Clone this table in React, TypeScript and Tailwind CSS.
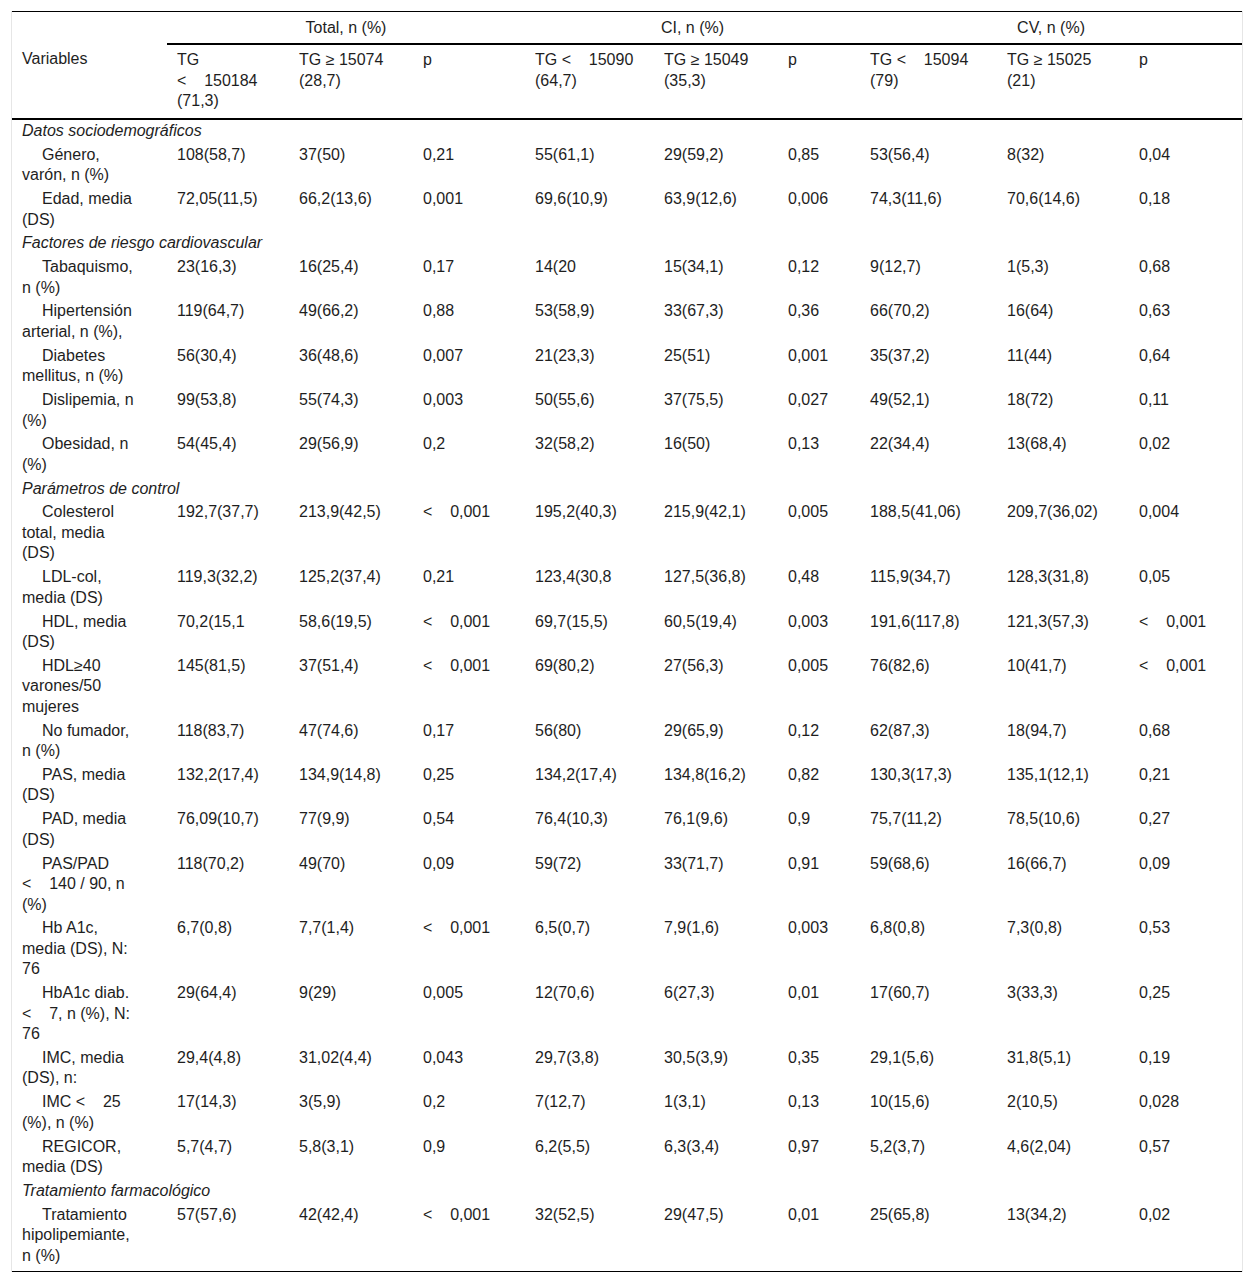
import React from "react";

type Row = { section: string } | { cells: string[] };

const rows: Row[] = [
  { section: "Datos sociodemográficos" },
  { cells: ["Género, varón, n (%)", "108(58,7)", "37(50)", "0,21", "55(61,1)", "29(59,2)", "0,85", "53(56,4)", "8(32)", "0,04"] },
  { cells: ["Edad, media (DS)", "72,05(11,5)", "66,2(13,6)", "0,001", "69,6(10,9)", "63,9(12,6)", "0,006", "74,3(11,6)", "70,6(14,6)", "0,18"] },
  { section: "Factores de riesgo cardiovascular" },
  { cells: ["Tabaquismo, n (%)", "23(16,3)", "16(25,4)", "0,17", "14(20", "15(34,1)", "0,12", "9(12,7)", "1(5,3)", "0,68"] },
  { cells: ["Hipertensión arterial, n (%),", "119(64,7)", "49(66,2)", "0,88", "53(58,9)", "33(67,3)", "0,36", "66(70,2)", "16(64)", "0,63"] },
  { cells: ["Diabetes mellitus, n (%)", "56(30,4)", "36(48,6)", "0,007", "21(23,3)", "25(51)", "0,001", "35(37,2)", "11(44)", "0,64"] },
  { cells: ["Dislipemia, n (%)", "99(53,8)", "55(74,3)", "0,003", "50(55,6)", "37(75,5)", "0,027", "49(52,1)", "18(72)", "0,11"] },
  { cells: ["Obesidad, n (%)", "54(45,4)", "29(56,9)", "0,2", "32(58,2)", "16(50)", "0,13", "22(34,4)", "13(68,4)", "0,02"] },
  { section: "Parámetros de control" },
  { cells: ["Colesterol total, media (DS)", "192,7(37,7)", "213,9(42,5)", "<0,001", "195,2(40,3)", "215,9(42,1)", "0,005", "188,5(41,06)", "209,7(36,02)", "0,004"] },
  { cells: ["LDL-col, media (DS)", "119,3(32,2)", "125,2(37,4)", "0,21", "123,4(30,8", "127,5(36,8)", "0,48", "115,9(34,7)", "128,3(31,8)", "0,05"] },
  { cells: ["HDL, media (DS)", "70,2(15,1", "58,6(19,5)", "<0,001", "69,7(15,5)", "60,5(19,4)", "0,003", "191,6(117,8)", "121,3(57,3)", "<0,001"] },
  { cells: ["HDL≥40 varones/50 mujeres", "145(81,5)", "37(51,4)", "<0,001", "69(80,2)", "27(56,3)", "0,005", "76(82,6)", "10(41,7)", "<0,001"] },
  { cells: ["No fumador, n (%)", "118(83,7)", "47(74,6)", "0,17", "56(80)", "29(65,9)", "0,12", "62(87,3)", "18(94,7)", "0,68"] },
  { cells: ["PAS, media (DS)", "132,2(17,4)", "134,9(14,8)", "0,25", "134,2(17,4)", "134,8(16,2)", "0,82", "130,3(17,3)", "135,1(12,1)", "0,21"] },
  { cells: ["PAD, media (DS)", "76,09(10,7)", "77(9,9)", "0,54", "76,4(10,3)", "76,1(9,6)", "0,9", "75,7(11,2)", "78,5(10,6)", "0,27"] },
  { cells: ["PAS/PAD <140 / 90, n (%)", "118(70,2)", "49(70)", "0,09", "59(72)", "33(71,7)", "0,91", "59(68,6)", "16(66,7)", "0,09"] },
  { cells: ["Hb A1c, media (DS), N: 76", "6,7(0,8)", "7,7(1,4)", "<0,001", "6,5(0,7)", "7,9(1,6)", "0,003", "6,8(0,8)", "7,3(0,8)", "0,53"] },
  { cells: ["HbA1c diab. <7, n (%), N: 76", "29(64,4)", "9(29)", "0,005", "12(70,6)", "6(27,3)", "0,01", "17(60,7)", "3(33,3)", "0,25"] },
  { cells: ["IMC, media (DS), n:", "29,4(4,8)", "31,02(4,4)", "0,043", "29,7(3,8)", "30,5(3,9)", "0,35", "29,1(5,6)", "31,8(5,1)", "0,19"] },
  { cells: ["IMC <25 (%), n (%)", "17(14,3)", "3(5,9)", "0,2", "7(12,7)", "1(3,1)", "0,13", "10(15,6)", "2(10,5)", "0,028"] },
  { cells: ["REGICOR, media (DS)", "5,7(4,7)", "5,8(3,1)", "0,9", "6,2(5,5)", "6,3(3,4)", "0,97", "5,2(3,7)", "4,6(2,04)", "0,57"] },
  { section: "Tratamiento farmacológico" },
  { cells: ["Tratamiento hipolipemiante, n (%)", "57(57,6)", "42(42,4)", "<0,001", "32(52,5)", "29(47,5)", "0,01", "25(65,8)", "13(34,2)", "0,02"] },
];

// "<" is followed by a wide gap and stays glued to the next token
function Txt({ s }: { s: string }) {
  const i = s.indexOf("<");
  if (i < 0) return <>{s}</>;
  const rest = s.slice(i + 1);
  const sp = rest.search(/[ ]/);
  const tok = sp < 0 ? rest : rest.slice(0, sp);
  const tail = sp < 0 ? "" : rest.slice(sp);
  return (
    <>
      {s.slice(0, i)}
      <span className="whitespace-nowrap">{"<\u00a0\u00a0\u00a0\u00a0" + tok}</span>
      {tail}
    </>
  );
}

const widths = ["w-[155px]", "w-[122px]", "w-[124px]", "w-[112px]", "w-[129px]", "w-[124px]", "w-[82px]", "w-[137px]", "w-[132px]", "w-[113px]"];

const subHeads = ["TG <150184 (71,3)", "TG ≥ 15074 (28,7)", "p", "TG <15090 (64,7)", "TG ≥ 15049 (35,3)", "p", "TG <15094 (79)", "TG ≥ 15025 (21)", "p"];

export default function App() {
  return (
    <div className="min-h-[1285px] bg-white pl-[11px] pt-[11px] font-['Liberation_Sans',Arial,sans-serif] text-[16px] leading-[20.5px] text-[#1e1e1e]">
      <div className="w-[1232px] border-x border-[#e6e6e6]">
        <table className="w-full table-fixed border-collapse">
          <colgroup>
            {widths.map((w, i) => (
              <col key={i} className={w} />
            ))}
          </colgroup>
          <thead>
            <tr className="border-t border-black">
              <th className="p-0" />
              <th colSpan={3} className="border-b-2 border-black px-[10px] pb-[4.5px] pt-[6px] text-center font-normal">
                Total, n (%)
              </th>
              <th colSpan={3} className="border-b-2 border-black px-[10px] pb-[4.5px] pt-[6px] text-center font-normal">
                CI, n (%)
              </th>
              <th colSpan={3} className="border-b-2 border-black px-[10px] pb-[4.5px] pt-[6px] text-center font-normal">
                CV, n (%)
              </th>
            </tr>
            <tr className="border-b-2 border-black">
              <th className="px-[10px] pb-[6.5px] pt-[5px] text-left align-top font-normal">Variables</th>
              {subHeads.map((h, i) => (
                <th key={i} className="px-[10px] pb-[6.5px] pt-[5px] text-left align-top font-normal">
                  <Txt s={h} />
                </th>
              ))}
            </tr>
          </thead>
          <tbody>
            {rows.map((r, ri) => {
              const last = ri === rows.length - 1;
              const pad = last ? "pt-px pb-[5px]" : "pt-px pb-[2.3px]";
              if ("section" in r)
                return (
                  <tr key={ri}>
                    <td colSpan={10} className={`px-[10px] italic ${pad}`}>
                      {r.section}
                    </td>
                  </tr>
                );
              return (
                <tr key={ri} className={last ? "border-b border-black" : ""}>
                  <td className={`pl-[10px] align-top ${pad}`}>
                    <div className="w-[114px] indent-[20px]">
                      <Txt s={r.cells[0]} />
                    </div>
                  </td>
                  {r.cells.slice(1).map((c, ci) => (
                    <td key={ci} className={`px-[10px] align-top ${pad}`}>
                      <Txt s={c} />
                    </td>
                  ))}
                </tr>
              );
            })}
          </tbody>
        </table>
      </div>
    </div>
  );
}
